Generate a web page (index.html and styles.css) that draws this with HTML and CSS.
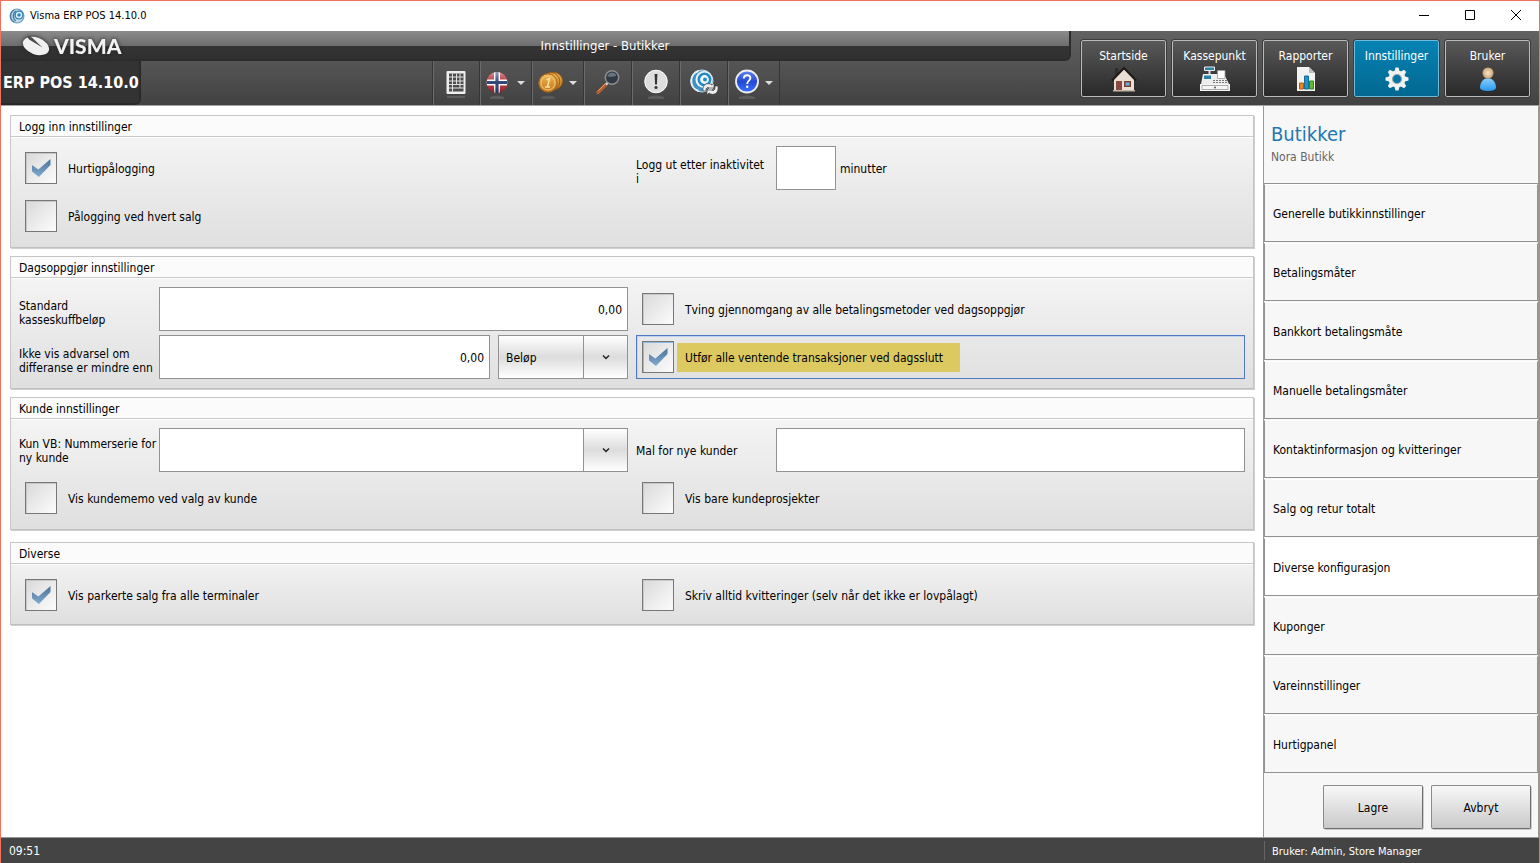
FILE: index.html
```html
<!DOCTYPE html>
<html lang="no">
<head>
<meta charset="utf-8">
<title>Visma ERP POS 14.10.0</title>
<link rel="stylesheet" href="styles.css">
</head>
<body>
<div class="window">
  <header class="titlebar">
    <svg class="app-icon" viewBox="0 0 16 16" aria-hidden="true">
      <circle cx="8" cy="8" r="7.5" fill="#6f9cbc"/>
      <circle cx="8" cy="8" r="6.4" fill="#c5d9e6"/>
      <path d="M5 2a7 7 0 0 0 0 12M7 3a6 6 0 0 0 0 10" fill="none" stroke="#3f7fab" stroke-width="1.3"/>
      <circle cx="10" cy="7" r="4.6" fill="#2b85be"/>
      <circle cx="10" cy="7" r="3.2" fill="#e4f1f9"/>
      <circle cx="10" cy="7" r="1.8" fill="#2b85be"/>
    </svg>
    <span class="window-title">Visma ERP POS 14.10.0</span>
    <div class="window-controls">
      <button type="button" aria-label="Minimer"><svg viewBox="0 0 12 12"><path d="M1 5.500h10"/></svg></button>
      <button type="button" aria-label="Maksimer"><svg viewBox="0 0 12 12"><path d="M1.500 .5h9v9h-9z"/></svg></button>
      <button type="button" aria-label="Lukk"><svg viewBox="0 0 12 12"><path d="M1 0l10 10M11 0L1 10"/></svg></button>
    </div>
  </header>

  <div class="topbar">
    <div class="brand-area">
      <div class="title-strip">
        <div class="logo">
          <svg class="logo-mark" viewBox="0 0 28 20" aria-hidden="true">
            <ellipse cx="14" cy="10" rx="13.600" ry="8.400" transform="rotate(20 14 10)" fill="#f0f0f0"/>
            <path d="M5 0L10 1.500 20.500 11.500 7 3.500Z" fill="#4a4a4a"/>
          </svg>
          <span class="logo-text">VISMA</span>
        </div>
        <h1 class="page-title">Innstillinger - Butikker</h1>
      </div>
      <div class="tool-row">
        <div class="product">ERP POS 14.10.0</div>
        <nav class="tools" aria-label="Verktøy">
          <button type="button" class="tool keypad" aria-label="Tastatur">
            <svg class="tool-icon" viewBox="0 0 28 32"><rect x="4.500" y="4" width="19" height="23" rx="1" fill="#eee"/><path d="M7 6.500h14.500v18H7z" fill="#4c4c4c"/><path d="M7 10h14.500M7 14h14.500M7 17.500h14.500M7 21h14.500M10.500 6.500v18M14.500 6.500v11M18 6.500v14.500" stroke="#e2e2e2"/><path d="M5 29h18v2H5z" fill="#777" opacity=".5"/></svg>
          </button>
          <button type="button" class="tool wide" aria-label="Språk">
            <svg class="tool-icon" viewBox="0 0 28 32"><defs><clipPath id="ball"><circle cx="14" cy="15.500" r="10.500"/></clipPath><linearGradient id="shine" x2="0" y2="1"><stop stop-color="#fff" stop-opacity=".5"/><stop offset=".5" stop-color="#fff" stop-opacity=".05"/><stop offset="1" stop-opacity=".3"/></linearGradient></defs><g clip-path="url(#ball)"><path d="M3 5h22v22H3z" fill="#b3202c"/><path d="M14 5v22M3 15.500h22" stroke="#fff" stroke-width="6"/><path d="M14 5v22M3 15.500h22" stroke="#243a70" stroke-width="3.200"/></g><circle cx="14" cy="15.500" r="10.500" fill="url(#shine)"/><path d="M7 30q7-3 14 0v2H7z" fill="#888" opacity=".35"/></svg>
            <span class="caret"></span>
          </button>
          <button type="button" class="tool wide" aria-label="Valuta">
            <svg class="tool-icon" viewBox="0 0 28 32"><defs><linearGradient id="gold" x2="0" y2="1"><stop stop-color="#f0b956"/><stop offset="1" stop-color="#bf751b"/></linearGradient></defs><circle cx="19" cy="14" r="8.500" fill="url(#gold)" stroke="#9c5c12"/><circle cx="16" cy="14.500" r="8.800" fill="url(#gold)" stroke="#9c5c12"/><circle cx="13" cy="16" r="9.200" fill="url(#gold)" stroke="#a36218"/><circle cx="13" cy="16" r="7" fill="none" stroke="#f5ca76"/><path d="M11.500 13l3-1.500-2 8.500M10 20h5" fill="none" stroke="#fbe0a0" stroke-width="1.500"/><path d="M6 30q7-3 14 0v2H6z" fill="#888" opacity=".3"/></svg>
            <span class="caret"></span>
          </button>
          <button type="button" class="tool" aria-label="Søk">
            <svg class="tool-icon" viewBox="0 0 28 32"><path d="M4 25.500L12 17.500" stroke="#b65f30" stroke-width="3.400" stroke-linecap="round"/><path d="M4 24L11 17" stroke="#e69b6c"/><path d="M12 17.500l2-2" stroke="#ddd" stroke-width="2.400"/><circle cx="18" cy="10.500" r="6.700" fill="#2f3a44" stroke="#8e8e8e" stroke-width="1.500"/><path d="M13 9.500q4-7 9-2q1 3-9 2" fill="#66757f"/></svg>
          </button>
          <button type="button" class="tool" aria-label="Varsler">
            <svg class="tool-icon" viewBox="0 0 28 32"><circle cx="14" cy="14.500" r="11.300" fill="#dedede" stroke="#fff"/><path d="M12.600 7h2.800l-.5 10.500h-1.800z" fill="#333"/><circle cx="14" cy="20.500" r="1.600" fill="#333"/><path d="M6 30q8-3 16 0v2H6z" fill="#888" opacity=".35"/></svg>
          </button>
          <button type="button" class="tool" aria-label="Synkroniser">
            <svg class="tool-icon" viewBox="0 0 28 32"><circle cx="12" cy="14" r="11" fill="#3f93c2" stroke="#cfe2ec"/><path d="M8.500 4a10.500 10.500 0 0 0 0 20" fill="none" stroke="#e8f2f7" stroke-width="2"/><circle cx="14" cy="12.500" r="8.500" fill="#eef6fa"/><circle cx="14.500" cy="12.500" r="5.700" fill="none" stroke="#258bc3" stroke-width="2.600"/><circle cx="15" cy="12.500" r="2" fill="#258bc3"/><path d="M13 24c-1-7 5-9 9-6l2-2v7h-7l2-2c-2-1-3 0-3 3zM28 19c1 8-5 10-9 7l-2 2v-7h7l-2 2c2 1 3 0 3-4z" fill="#eee" stroke="#444" stroke-width=".7"/></svg>
          </button>
          <button type="button" class="tool wide" aria-label="Hjelp">
            <svg class="tool-icon" viewBox="0 0 28 32"><defs><linearGradient id="help" x2="0" y2="1"><stop stop-color="#6486ee"/><stop offset=".5" stop-color="#2448d4"/><stop offset="1" stop-color="#3774ff"/></linearGradient></defs><circle cx="16" cy="14.500" r="11" fill="url(#help)" stroke="#eee" stroke-width="1.800"/><path d="M12.800 11.500c.2-4.500 6.800-4 6.600-.5c-.2 2.800-3.200 2.500-3.200 6" fill="none" stroke="#fff" stroke-width="1.900"/><circle cx="16.200" cy="19.800" r="1.200" fill="#fff"/><path d="M8 30q8-3 16 0v2H8z" fill="#888" opacity=".35"/></svg>
            <span class="caret"></span>
          </button>
        </nav>
      </div>
    </div>
    <nav class="modules" aria-label="Moduler">
      <button type="button" class="module"><span>Startside</span>
        <svg viewBox="0 0 32 28"><path d="M6 13L16 3l10 10v12H6z" fill="#eadfd3"/><path d="M7 2h3v7H7z" fill="#332a29"/><path d="M4 14.500L16 2l12 12.500" fill="none" stroke="#211b1b" stroke-width="2.200"/><path d="M8 15h6v9H8z" fill="#8a4a42"/><path d="M16 15h7v6h-7z" fill="#7d4039"/><path d="M17.500 16.500h4v3h-4z" fill="#62b6da"/><path d="M5 24h22v1.500H5z" fill="#c5b6a8"/></svg>
      </button>
      <button type="button" class="module"><span>Kassepunkt</span>
        <svg viewBox="0 0 32 28"><path d="M5.500 1h10v3.500h-10z" fill="#2a83a5" stroke="#eee"/><path d="M9.500 5h2v3h-2z" fill="#ddd"/><path d="M4 8h21l5 10H2z" fill="#eee"/><path d="M18.500 4.500h7.500v8h-7.500z" fill="#fff" stroke="#999" stroke-width=".8"/><path d="M5 9.500h7V13H5z" fill="#2a83a5"/><path d="M14 14.500h14M14 16.500h14" stroke="#777" stroke-dasharray="2 1"/><path d="M1 18h30v7H1z" fill="#f5f5f5"/><path d="M3 19.500h26v4H3z" fill="none" stroke="#999" stroke-width=".8"/><circle cx="16" cy="21.500" r="1" fill="#555"/></svg>
      </button>
      <button type="button" class="module"><span>Rapporter</span>
        <svg viewBox="0 0 32 28"><path d="M7 1h12l6 6v18H7z" fill="#f3f3f3"/><path d="M19 1v6h6z" fill="#bbb"/><path d="M9.500 17h4v6h-4z" fill="#e98421" stroke="#b75d0d"/><path d="M14.500 10h4v13h-4z" fill="#278fc5" stroke="#146d9b"/><path d="M19.500 15h4v8h-4z" fill="#63b930" stroke="#378916"/></svg>
      </button>
      <button type="button" class="module active"><span>Innstillinger</span>
        <svg viewBox="0 0 32 28"><g fill="#f2f2f2"><g id="teeth"><path id="tooth" d="M13.500 5l1-3.500h3l1 3.500v16l-1 3.500h-3l-1-3.500z"/><use href="#tooth" transform="rotate(90 16 13)"/></g><use href="#teeth" transform="rotate(45 16 13)"/><circle cx="16" cy="13" r="8.500"/></g><circle cx="16" cy="13" r="4.500" fill="#0477a6" stroke="#9aa4a8" stroke-width="1.200"/></svg>
      </button>
      <button type="button" class="module"><span>Bruker</span>
        <svg viewBox="0 0 32 28"><defs><linearGradient id="body" x2="0" y2="1"><stop stop-color="#8bcfff"/><stop offset="1" stop-color="#2997ef"/></linearGradient><radialGradient id="head"><stop stop-color="#ffe8c9"/><stop offset="1" stop-color="#c9a27a"/></radialGradient></defs><path d="M8 22c0-13 16-13 16 0q-1 3-8 3t-8-3z" fill="url(#body)"/><circle cx="16" cy="7" r="5.500" fill="url(#head)"/></svg>
      </button>
    </nav>
  </div>

  <div class="workspace">
    <main class="settings">
      <section class="group">
        <h2>Logg inn innstillinger</h2>
        <div class="fields">
          <label class="check"><input type="checkbox" checked><span>Hurtigpålogging</span></label>
          <div class="field"><label class="caption low" for="timeout">Logg ut etter inaktivitet<br>i</label><input class="box short" id="timeout" type="text"><span class="unit">minutter</span></div>
          <label class="check"><input type="checkbox"><span>Pålogging ved hvert salg</span></label>
        </div>
      </section>

      <section class="group">
        <h2>Dagsoppgjør innstillinger</h2>
        <div class="fields">
          <div class="field"><label class="caption low" for="cash">Standard<br>kasseskuffbeløp</label><input class="box" id="cash" type="text" value="0,00"></div>
          <label class="check"><input type="checkbox"><span>Tving gjennomgang av alle betalingsmetoder ved dagsoppgjør</span></label>
          <div class="field"><label class="caption low" for="diff">Ikke vis advarsel om differanse er mindre enn</label><input class="box" id="diff" type="text" value="0,00">
            <div class="combo unit-combo"><select class="shaded" aria-label="Enhet"><option>Beløp</option></select><span class="combo-arrow"><svg viewBox="0 0 8 6"><path d="M1 1.500l3 3 3-3"/></svg></span></div>
          </div>
          <label class="check focused"><input type="checkbox" checked><span class="marked">Utfør alle ventende transaksjoner ved dagsslutt</span></label>
        </div>
      </section>

      <section class="group">
        <h2>Kunde innstillinger</h2>
        <div class="fields">
          <div class="field"><label class="caption" for="series">Kun VB: Nummerserie for ny kunde</label>
            <div class="combo"><select id="series"><option></option></select><span class="combo-arrow"><svg viewBox="0 0 8 6"><path d="M1 1.500l3 3 3-3"/></svg></span></div>
          </div>
          <div class="field"><label class="caption" for="template">Mal for nye kunder</label><input class="box" id="template" type="text"></div>
          <label class="check"><input type="checkbox"><span>Vis kundememo ved valg av kunde</span></label>
          <label class="check"><input type="checkbox"><span>Vis bare kundeprosjekter</span></label>
        </div>
      </section>

      <section class="group separate">
        <h2>Diverse</h2>
        <div class="fields">
          <label class="check"><input type="checkbox" checked><span>Vis parkerte salg fra alle terminaler</span></label>
          <label class="check"><input type="checkbox"><span>Skriv alltid kvitteringer (selv når det ikke er lovpålagt)</span></label>
        </div>
      </section>
    </main>

    <aside class="sidebar">
      <div class="sidebar-head"><h2>Butikker</h2><p>Nora Butikk</p></div>
      <nav class="sections" aria-label="Butikkinnstillinger">
        <button type="button">Generelle butikkinnstillinger</button>
        <button type="button">Betalingsmåter</button>
        <button type="button">Bankkort betalingsmåte</button>
        <button type="button">Manuelle betalingsmåter</button>
        <button type="button">Kontaktinformasjon og kvitteringer</button>
        <button type="button">Salg og retur totalt</button>
        <button type="button" class="current">Diverse konfigurasjon</button>
        <button type="button">Kuponger</button>
        <button type="button">Vareinnstillinger</button>
        <button type="button">Hurtigpanel</button>
      </nav>
      <div class="actions"><button type="button">Lagre</button><button type="button">Avbryt</button></div>
    </aside>
  </div>

  <footer class="statusbar"><span>09:51</span><span class="user">Bruker: Admin, Store Manager</span></footer>
</div>
</body>
</html>
```

FILE: styles.css
```css
* { box-sizing: border-box; }
body { margin: 0; }
body, button, input, select {
  font-family: "DejaVu Sans Condensed", "DejaVu Sans", sans-serif;
  font-size: 12px;
  line-height: 14px;
  color: #000;
}
h1, h2, p { margin: 0; font-weight: 400; }
button { padding: 0; border: 0; background: none; }

.window {
  display: flex;
  flex-direction: column;
  min-height: 100vh;
  border: 1px solid #f0735f;
  background: #fff;
}

.titlebar { display: flex; align-items: center; height: 30px; padding-left: 8px; }
.app-icon { width: 16px; height: 16px; margin-right: 5px; }
.window-title { font-size: 11px; }
.window-controls { display: flex; margin-left: auto; }
.window-controls button { display: grid; place-items: center; width: 46px; height: 30px; }
.window-controls svg { width: 12px; height: 12px; fill: none; stroke: #000; }

.topbar {
  display: flex;
  height: 75px;
  border-bottom: 1px solid #a3a3a3;
  background: linear-gradient(#626262, #424242);
}
.brand-area { flex: 1; display: flex; flex-direction: column; }
.title-strip {
  display: grid;
  grid-template-columns: 140px 1fr;
  height: 30px;
  border-right: 2px solid #2c2c2c;
  border-bottom: 2px solid #2c2c2c;
  border-bottom-right-radius: 6px;
  background: linear-gradient(#8b8b8b, #6d6d6d 15px, #343434 15px, #303030);
}
.logo { display: flex; align-items: center; height: 30px; padding-left: 21px; gap: 4px; filter: drop-shadow(0 0 2px #222); }
.logo-mark { width: 28px; height: 20px; }
.logo-text { font: 900 21px/30px Lato, "Liberation Sans", sans-serif; color: #f2f2f2; }
.page-title { font-size: 13px; line-height: 30px; color: #fff; text-align: center; }
.tool-row { flex: 1; display: flex; }
.product {
  width: 140px;
  height: 44px;
  padding-left: 2px;
  border-right: 2px solid #2a2a2a;
  border-bottom: 2px solid #2a2a2a;
  border-bottom-right-radius: 6px;
  background: #333;
  color: #fff;
  font: bold 16px/44px "DejaVu Sans Condensed", "DejaVu Sans", sans-serif;
  white-space: nowrap;
}
.tools { display: flex; margin: 0 auto; border-right: 1px solid #363636; }
.tool {
  display: flex;
  align-items: center;
  justify-content: center;
  gap: 6px;
  width: 48px;
  border-left: 1px solid #363636;
  box-shadow: inset 1px 0 #6b6b6b;
}
.tool.keypad { width: 47px; }
.tool.wide { justify-content: flex-start; width: 52px; padding-left: 3px; }
.tool-icon { width: 28px; height: 32px; }
.caret { border: 4px solid transparent; border-top-color: #ddd; border-bottom: 0; }

.modules { display: flex; gap: 6px; padding: 9px 9px 8px 10px; }
.module {
  display: flex;
  flex-direction: column;
  align-items: center;
  width: 85px;
  padding-top: 8px;
  border: 1px solid #bbb;
  border-radius: 2px;
  outline: 1px solid #3c3c3c;
  background: linear-gradient(#595959, #292929);
}
.module span { color: #fff; }
.module svg { width: 32px; height: 28px; margin-top: 3px; }
.module.active { border-color: #6fbbdb; background: linear-gradient(#0683b4, #026890); }

.workspace { flex: 1; display: flex; }
.settings { flex: 1; display: flex; flex-direction: column; gap: 8px; padding: 9px; }
.group {
  border: 1px solid #c6c6c6;
  border-bottom-color: #bfbfbf;
  box-shadow: 1px 1px #cfcfcf;
  background: linear-gradient(#f8f8f8, #dfdfdf);
}
.group.separate { margin-top: 4px; }
.group.separate .fields { padding-bottom: 7px; }
.group h2 {
  height: 21px;
  padding-left: 8px;
  border-bottom: 1px solid #c9c9c9;
  background: #fbfbfb;
  box-shadow: 0 1px #fff;
  font-size: 12px;
  line-height: 23px;
}
.fields { display: grid; grid-template-columns: 1fr 1fr; gap: 4px 8px; padding: 9px 8px; }
.field { display: flex; align-items: center; min-width: 0; height: 44px; }
.caption { flex: 0 0 140px; padding-top: 2px; }
.caption.low { padding-top: 8px; }
.box {
  flex: 1;
  min-width: 0;
  height: 44px;
  padding: 2px 5px 0;
  border: 1px solid #929292;
  border-radius: 0;
  background: #fff;
  text-align: right;
}
.box.short { flex: 0 0 60px; }
.unit { padding: 2px 0 0 4px; }
.check { display: flex; align-items: center; height: 44px; padding: 0 5px; border: 1px solid transparent; }
.check input {
  appearance: none;
  display: grid;
  place-items: center;
  flex: none;
  width: 32px;
  height: 32px;
  margin: 0;
  border: 1px solid #777;
  background: linear-gradient(135deg, #d9d9d9, #fcfcfc);
  box-shadow: inset 1px 1px #c8c8c8;
}
.check input:checked::before {
  content: "";
  width: 19px;
  height: 18px;
  background: linear-gradient(#4a7299, #82abd0);
  clip-path: polygon(0 32%, 36% 58%, 100% 0, 100% 34%, 39% 100%, 0 66%);
}
.check span { padding: 2px 0 0 11px; }
.check.focused { border-color: #5179c4; box-shadow: inset 1px 1px #bcd3f2; }
.check.focused input { box-shadow: inset 1px 1px #8dbce9; }
.check .marked { margin-left: 3px; padding: 8px 17px 7px 8px; background: #dcca60; }

.combo { position: relative; flex: 1; height: 44px; }
.unit-combo { flex: 0 0 130px; margin-left: 8px; }
.combo select {
  appearance: none;
  width: 100%;
  height: 44px;
  padding: 2px 50px 0 7px;
  border: 1px solid #929292;
  border-radius: 0;
  background: #fff;
}
.combo select.shaded { background: linear-gradient(#fff, #dcdcdc 50%, #fff); }
.combo-arrow {
  position: absolute;
  top: 0;
  right: 0;
  display: grid;
  place-items: center;
  width: 45px;
  height: 44px;
  border: 1px solid #929292;
  background: linear-gradient(#fff, #dcdcdc 50%, #fff);
  pointer-events: none;
}
.combo-arrow svg { width: 8px; height: 6px; fill: none; stroke: #222; stroke-width: 1.5; }

.sidebar {
  display: flex;
  flex-direction: column;
  width: 276px;
  border: 1px solid #999;
  border-width: 0 1px;
  background: #f7f7f7;
}
.sidebar-head { height: 78px; padding: 14px 7px 0; border-bottom: 1px solid #929292; }
.sidebar-head h2 { color: #2277b0; font-size: 20px; line-height: 28px; }
.sidebar-head p { color: #666; line-height: 18px; }
.sections { display: flex; flex-direction: column; gap: 1px; }
.sections button {
  height: 58px;
  padding: 2px 8px 0;
  border: 1px solid #929292;
  border-top-color: #fff;
  text-align: left;
}
.sections .current { background: #fff; }
.actions { display: flex; justify-content: flex-end; gap: 8px; margin-top: auto; padding: 12px 7px 8px; }
.actions button {
  width: 100px;
  height: 44px;
  padding-top: 2px;
  border: 1px solid #8b8b8b;
  border-right-color: #6e6e6e;
  border-bottom-color: #6e6e6e;
  border-radius: 2px;
  box-shadow: 1px 1px #ccc;
  background: linear-gradient(#f8f8f8, #c9c9c9);
}

.statusbar {
  display: flex;
  justify-content: space-between;
  height: 26px;
  padding-left: 8px;
  border-top: 1px solid #999;
  background: #444;
  line-height: 27px;
}
.statusbar span { color: #fff; }
.statusbar .user {
  width: 275px;
  margin: 3px 0;
  padding-left: 7px;
  border-left: 1px solid #666;
  font-size: 11px;
  line-height: 21px;
}
```
